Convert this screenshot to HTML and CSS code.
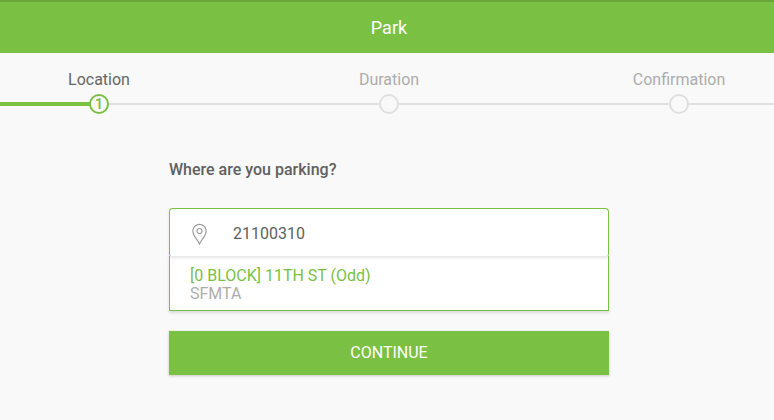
FILE: index.html
```html
<!DOCTYPE html>
<html lang="en">
<head>
<meta charset="utf-8">
<title>Park</title>
<link rel="stylesheet" href="styles.css">
</head>
<body>
<header class="topbar">Park</header>
<nav class="stepper">
  <div class="step active">
    <span class="step-label">Location</span>
    <span class="step-track"><span class="dot">1</span></span>
  </div>
  <div class="step">
    <span class="step-label">Duration</span>
    <span class="step-track"><span class="dot"></span></span>
  </div>
  <div class="step">
    <span class="step-label">Confirmation</span>
    <span class="step-track"><span class="dot"></span></span>
  </div>
</nav>
<main class="content">
  <h1 class="question">Where are you parking?</h1>
  <div class="search">
    <svg class="pin" width="18" height="22" viewBox="0 0 18 22" fill="none" stroke="#a0a0a0" stroke-width="1.2">
      <path d="M9.5 21C7.5 16.5 2.8 12.8 2.8 8A6.7 6.7 0 0 1 16.2 8C16.2 12.8 11.5 16.5 9.5 21Z"/>
      <circle cx="9.5" cy="8" r="2.5"/>
    </svg>
    <span class="search-value">21100310</span>
  </div>
  <div class="result">
    <div class="result-title">[0 BLOCK] 11TH ST (Odd)</div>
    <div class="result-sub">SFMTA</div>
  </div>
  <button class="continue">CONTINUE</button>
</main>
</body>
</html>
```
FILE: styles.css
```css
* { box-sizing: border-box; }
html, body { margin: 0; height: 100%; }
body {
  background: #f9f9f9;
  font-family: Roboto, "Liberation Sans", sans-serif;
  overflow: hidden;
}
.topbar {
  height: 53px;
  background: #7ac143;
  border-top: 2px solid #6aa53c;
  padding-left: 4px;
  color: #fff;
  font-size: 18px;
  font-weight: 400;
  display: flex;
  align-items: center;
  justify-content: center;
}
.stepper {
  display: grid;
  grid-template-columns: 198px 382px 198px;
  height: 62px;
}
.step {
  display: flex;
  flex-direction: column;
  align-items: center;
  padding-top: 17px;
}
.step-label {
  font-size: 16px;
  line-height: 19px;
  color: #adadad;
  margin-bottom: 5px;
}
.step.active .step-label { color: #666; }
.step-track {
  position: relative;
  align-self: stretch;
  height: 20px;
  display: flex;
  justify-content: center;
}
.step-track::before {
  content: "";
  position: absolute;
  left: 0;
  right: 0;
  top: 9px;
  height: 2px;
  background: #e0e0e0;
}
.step.active .step-track::after {
  content: "";
  position: absolute;
  left: 0;
  right: 50%;
  top: 8px;
  height: 4px;
  background: #7ac143;
}
.dot {
  position: relative;
  z-index: 1;
  width: 20px;
  height: 20px;
  border: 2px solid #e0e0e0;
  border-radius: 50%;
  background: #f9f9f9;
  color: #7ac143;
  font-size: 15px;
  font-weight: 500;
  line-height: 16px;
  text-align: center;
}
.step.active .dot { border-color: #7ac143; }
.content {
  width: 440px;
  margin-left: 169px;
}
.question {
  margin: 0;
  padding-top: 45px;
  font-size: 16px;
  line-height: 19px;
  font-weight: 500;
  color: #606060;
}
.search {
  margin-top: 29px;
  height: 48px;
  padding-top: 2px;
  background: #fff;
  border: 1px solid #7ac143;
  border-bottom: 0;
  border-radius: 4px 4px 2px 2px;
  box-shadow: 0 2px 3px rgba(0, 0, 0, 0.1);
  display: flex;
  align-items: center;
  padding-left: 20px;
  position: relative;
  z-index: 1;
}
.pin { flex: none; }
.search-value {
  margin-left: 25px;
  font-size: 16px;
  color: #606060;
}
.result {
  height: 55px;
  background: #fff;
  border: 1px solid #7ac143;
  border-top: 0;
  box-shadow: 0 2px 3px rgba(0, 0, 0, 0.12);
  padding: 11px 20px 0;
  font-size: 16px;
  line-height: 18px;
}
.result-title { color: #7ac143; }
.result-sub { color: #adadad; }
.continue {
  display: block;
  width: 100%;
  height: 44px;
  margin-top: 20px;
  padding: 0 0 2px;
  border: 0;
  background: #7ac143;
  color: #fff;
  font-family: inherit;
  font-size: 16px;
  font-weight: 400;
  box-shadow: 0 1px 3px rgba(0, 0, 0, 0.2);
}
```
